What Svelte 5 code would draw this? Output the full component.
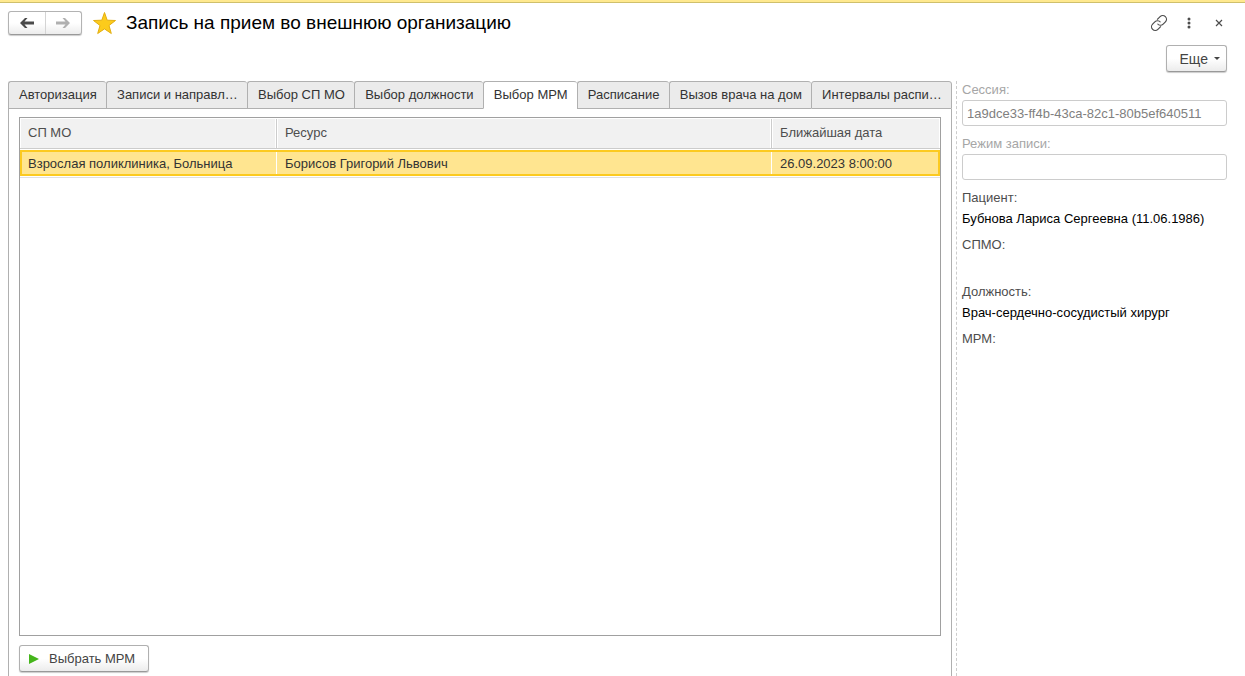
<script>
	const tabs = [
		{ id: 'auth', title: 'Авторизация' },
		{ id: 'records', title: 'Записи и направл…' },
		{ id: 'spmo', title: 'Выбор СП МО' },
		{ id: 'position', title: 'Выбор должности' },
		{ id: 'mrm', title: 'Выбор МРМ' },
		{ id: 'schedule', title: 'Расписание' },
		{ id: 'home', title: 'Вызов врача на дом' },
		{ id: 'intervals', title: 'Интервалы распи…' }
	];

	const rows = [
		{
			spmo: 'Взрослая поликлиника, Больница',
			resource: 'Борисов Григорий Львович',
			date: '26.09.2023 8:00:00'
		}
	];

	let activeTab = $state('mrm');
	let selected = $state(0);
	let favorite = $state(true);

	let session = $state('1a9dce33-ff4b-43ca-82c1-80b5ef640511');
	let mode = $state('');
</script>

<div class="window">
	<header>
		<div class="nav">
			<button type="button" aria-label="Назад">
				<svg width="14" height="10" viewBox="0 0 14 10">
					<path d="M0 5L5 0H7.500L4.500 3.500H14V6.500H4.500L7.500 10H5Z" fill="#4a4a4a" />
				</svg>
			</button>
			<button type="button" aria-label="Вперед">
				<svg width="14" height="10" viewBox="0 0 14 10">
					<path d="M14 5L9 0H6.500L9.500 3.500H0V6.500H9.500L6.500 10H9Z" fill="#b0b0b0" />
				</svg>
			</button>
		</div>
		<button type="button" class="star" aria-label="Избранное" onclick={() => (favorite = !favorite)}>
			<svg width="24" height="24" viewBox="0 0 24 24">
				<path
					d="M12.500 1.500L15.200 9.200L23.500 9.500L17 14.500L19.300 22.500L12.500 17.900L5.700 22.500L8 14.500L1.500 9.500L9.800 9.200Z"
					fill={favorite ? '#fccb1c' : '#fff'}
					stroke="#e3ae10"
				/>
			</svg>
		</button>
		<h1>Запись на прием во внешнюю организацию</h1>
		<div class="tools">
			<button type="button" aria-label="Получить ссылку">
				<svg width="18" height="18" viewBox="0 0 24 24" fill="none" stroke="#4d4d4d" stroke-width="1.600">
					<path d="M10 13a5 5 0 0 0 7.540.540l3-3a5 5 0 0 0-7.070-7.070l-4 4" />
					<path d="M14 11a5 5 0 0 0-7.540-.540l-3 3a5 5 0 0 0 7.070 7.070l4-4" />
				</svg>
			</button>
			<button type="button" aria-label="Дополнительно">
				<svg width="4" height="12" viewBox="0 0 4 12" fill="#4d4d4d">
					<circle cx="2" cy="2" r="1.500" />
					<circle cx="2" cy="6" r="1.500" />
					<circle cx="2" cy="10" r="1.500" />
				</svg>
			</button>
			<button type="button" aria-label="Закрыть">
				<svg width="8" height="8" viewBox="0 0 8 8" stroke="#4d4d4d" stroke-width="1.200">
					<path d="M1 1L7 7M7 1L1 7" />
				</svg>
			</button>
		</div>
	</header>

	<div class="commands">
		<button type="button" class="btn more">
			Еще
			<svg width="6" height="3" viewBox="0 0 6 3"><path d="M0 0H6L3 3Z" fill="#444" /></svg>
		</button>
	</div>

	<div class="content">
		<main>
			<div class="tabs" role="tablist">
				{#each tabs as tab (tab.id)}
					<button
						type="button"
						role="tab"
						class="tab"
						class:active={activeTab === tab.id}
						aria-selected={activeTab === tab.id}
						onclick={() => (activeTab = tab.id)}>{tab.title}</button
					>
				{/each}
			</div>

			<div class="panel">
				<div class="grid">
					<table>
						<thead>
							<tr>
								<th class="col-spmo">СП МО</th>
								<th>Ресурс</th>
								<th class="col-date">Ближайшая дата</th>
							</tr>
						</thead>
						<tbody>
							{#each rows as row, i}
								<tr class:selected={selected === i} onclick={() => (selected = i)}>
									<td>{row.spmo}</td>
									<td>{row.resource}</td>
									<td>{row.date}</td>
								</tr>
							{/each}
						</tbody>
					</table>
				</div>
				<button type="button" class="btn choose">
					<svg width="10" height="10" viewBox="0 0 10 10"><path d="M0 0L10 5L0 10Z" fill="#45b51b" /></svg>
					Выбрать МРМ
				</button>
			</div>
		</main>

		<aside>
			<label for="session">Сессия:</label>
			<input id="session" type="text" bind:value={session} readonly />
			<label for="mode">Режим записи:</label>
			<input id="mode" type="text" bind:value={mode} readonly />
			<dl>
				<dt>Пациент:</dt>
				<dd>Бубнова Лариса Сергеевна (11.06.1986)</dd>
				<dt>СПМО:</dt>
				<dd></dd>
				<dt>Должность:</dt>
				<dd>Врач-сердечно-сосудистый хирург</dd>
				<dt>МРМ:</dt>
				<dd></dd>
			</dl>
		</aside>
	</div>
</div>

<style>
	:global(body) {
		background: #fff;
	}

	.window {
		min-height: 100vh;
		box-sizing: border-box;
		display: flex;
		flex-direction: column;
		border-top: 2px solid #ffe98f;
		font-family: 'Liberation Sans', Arial, sans-serif;
		font-size: 13px;
		line-height: 16px;
		color: #333;
	}

	button,
	input {
		font: inherit;
		color: inherit;
		box-sizing: border-box;
		margin: 0;
	}

	button {
		padding: 0;
		border: none;
		background: none;
		cursor: pointer;
	}

	svg {
		display: block;
		flex: none;
	}

	header {
		display: flex;
		align-items: center;
		height: 40px;
		padding: 0 11px 0 8px;
		border-top: 1px solid #cfc06c;
	}

	.nav {
		display: flex;
		box-sizing: border-box;
		width: 74px;
		height: 24px;
		border: 1px solid #b3b3b3;
		border-bottom-color: #999;
		border-radius: 3px;
		background: linear-gradient(#fff 50%, #ececec);
		box-shadow: 0 1px 1px #ccc;
	}

	.nav button {
		flex: 1;
		display: flex;
		align-items: center;
		justify-content: center;
	}

	.nav button + button {
		border-left: 1px solid #d4d4d4;
	}

	.star {
		margin: 0 10px;
	}

	h1 {
		margin: 0;
		flex: 1;
		font-size: 19px;
		line-height: 22px;
		font-weight: normal;
		color: #000;
	}

	.tools {
		display: flex;
	}

	.tools button {
		display: flex;
		align-items: center;
		justify-content: center;
		width: 30px;
		height: 24px;
	}

	.commands {
		display: flex;
		justify-content: flex-end;
		padding: 2px 18px 9px;
	}

	.btn {
		display: flex;
		align-items: center;
		height: 27px;
		border: 1px solid #b0b0b0;
		border-bottom-color: #999;
		border-radius: 3px;
		background: linear-gradient(#fff 50%, #ececec);
		box-shadow: 0 1px 1px #ccc;
		color: #444;
	}

	.more {
		gap: 6px;
		padding: 0 6px 0 13px;
		font-size: 14px;
	}

	.choose {
		gap: 10px;
		padding: 0 13px 0 9px;
		align-self: flex-start;
	}

	.content {
		flex: 1;
		display: flex;
		padding: 0 18px 0 8px;
	}

	main {
		flex: 1;
		min-width: 0;
		display: flex;
		flex-direction: column;
	}

	.tabs {
		display: flex;
	}

	.tab {
		flex: 1 1 auto;
		height: 28px;
		padding: 0 8px 0 10px;
		border: 1px solid #b0b0b0;
		border-right-width: 0;
		border-radius: 3px 3px 0 0;
		background: #ebebeb;
		white-space: nowrap;
		text-align: left;
	}

	.tab:last-child {
		border-right-width: 1px;
	}

	.tab.active {
		background: #fff;
		border-bottom-color: #fff;
	}

	.panel {
		flex: 1;
		display: flex;
		flex-direction: column;
		gap: 9px;
		padding: 8px 10px 4px;
		border: solid #b0b0b0;
		border-width: 0 1px;
	}

	.grid {
		flex: 1;
		border: 1px solid #a0a0a0;
	}

	table {
		width: 100%;
		table-layout: fixed;
		border-collapse: separate;
		border-spacing: 0 1px;
	}

	th,
	td {
		box-sizing: border-box;
		padding: 0 8px;
		text-align: left;
		font-weight: normal;
		white-space: nowrap;
		overflow: hidden;
		text-overflow: ellipsis;
	}

	th {
		height: 30px;
		padding-bottom: 1px;
		background: #f1f1f1;
		border-right: 1px solid #ccc;
		border-bottom: 1px solid #ccc;
		box-shadow: inset 1px 0 #fff, inset -1px 0 #fff;
		color: #4d4d4d;
	}

	td {
		height: 26px;
		padding-top: 1px;
		border-right: 1px solid #fff;
	}

	th:last-child,
	td:last-child {
		border-right: none;
	}

	.col-spmo {
		width: 257px;
	}

	.col-date {
		width: 168px;
	}

	tbody tr {
		box-shadow: 0 1px #fff, 0 2px #e0e0e0;
	}

	tbody tr.selected {
		background: #ffe590;
		outline: 2px solid #fcca20;
		outline-offset: -2px;
	}

	aside {
		width: 265px;
		margin-left: 4px;
		padding: 1px 0 0 5px;
		border-left: 1px dashed #ccc;
	}

	label {
		display: block;
		margin-bottom: 2px;
		color: #a6a6a6;
	}

	input {
		display: block;
		width: 100%;
		height: 26px;
		margin-bottom: 10px;
		padding: 0 4px;
		border: 1px solid #ccc;
		border-radius: 3px;
		background: #fff;
		color: #808080;
		outline: none;
	}

	dl {
		margin: 0;
	}

	dt {
		color: #4d4d4d;
	}

	dd {
		min-height: 16px;
		margin: 5px 0 10px;
		color: #000;
	}
</style>
